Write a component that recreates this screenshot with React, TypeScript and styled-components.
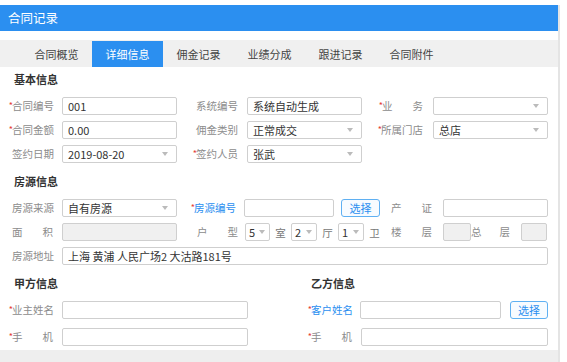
import React from "react"
import styled, { createGlobalStyle } from "styled-components"

const GlobalStyle = createGlobalStyle`
  html, body {
    margin: 0;
    padding: 0;
    background: #fff;
  }
  body {
    font-family: "Noto Sans CJK SC", "Noto Sans", sans-serif;
    color: #333;
  }
  * {
    box-sizing: border-box;
  }
`

const Panel = styled.div`
  width: 560px;
  margin-top: 5px;
  border-right: 2px solid #e4e4e4;
  background: #fff;
`

const Header = styled.div`
  height: 26px;
  line-height: 26px;
  padding-left: 8px;
  background: #2b8ff0;
  color: #fff;
  font-size: 12.5px;
`

const Tabs = styled.div`
  display: flex;
  margin-top: 9px;
  height: 27px;
  padding: 1px 0 0 21px;
  background: #f0f0f0;
`

const Tab = styled.div<{ $active?: boolean }>`
  width: 71px;
  line-height: 26px;
  text-align: center;
  font-size: 11px;
  color: ${p => (p.$active ? "#fff" : "#444")};
  background: ${p => (p.$active ? "#2b8ff0" : "transparent")};
`

const Body = styled.div`
  padding: 2px 10px 0 8px;
`

const SectionTitle = styled.div<{ $top?: number }>`
  height: 20px;
  line-height: 20px;
  margin-top: ${p => p.$top ?? 0}px;
  margin-bottom: 5px;
  padding-left: 6px;
  font-size: 11px;
  font-weight: bold;
  color: #333;
`

const Row = styled.div<{ $gap?: number }>`
  display: flex;
  align-items: center;
  height: 24px;
  margin-top: ${p => p.$gap ?? 0}px;
`

const LabelBox = styled.div<{ $w: number; $pr: number; $blue?: boolean }>`
  flex: none;
  display: flex;
  justify-content: flex-end;
  align-items: center;
  width: ${p => p.$w}px;
  padding-right: ${p => p.$pr}px;
  font-size: 10.5px;
  line-height: 14px;
  color: ${p => (p.$blue ? "#2b8ff0" : "#8c8c8c")};
`

const LabelText = styled.span`
  display: flex;
  justify-content: space-between;
  width: 41px;
`

const Star = styled.span`
  color: #e53935;
  font-size: 9px;
  margin-right: -1px;
`

const TextInput = styled.input<{ $w: number; $disabled?: boolean }>`
  flex: none;
  width: ${p => p.$w}px;
  height: 18px;
  margin: 0;
  padding: 0 5px;
  border: 1px solid #cfcfcf;
  border-radius: 2px;
  outline: none;
  font: inherit;
  font-size: 11px;
  line-height: 16px;
  color: #333;
  background: ${p => (p.$disabled ? "#f0f0f0" : "#fff")};
`

const SelectBox = styled.div<{ $w: number; $small?: boolean }>`
  flex: none;
  display: flex;
  align-items: center;
  justify-content: space-between;
  width: ${p => p.$w}px;
  height: 18px;
  padding: 0 ${p => (p.$small ? 4 : 8)}px 0 ${p => (p.$small ? 3 : 5)}px;
  border: 1px solid #cfcfcf;
  border-radius: 2px;
  font-size: 11px;
  color: #333;
  background: #fff;
`

const Arrow = styled.span`
  width: 0;
  height: 0;
  border-left: 3.5px solid transparent;
  border-right: 3.5px solid transparent;
  border-top: 4px solid #bbb;
`

const Button = styled.div<{ $w: number; $ml: number }>`
  flex: none;
  width: ${p => p.$w}px;
  height: 18px;
  margin-left: ${p => p.$ml}px;
  border: 1px solid #5fb0f2;
  border-radius: 3px;
  line-height: 16px;
  text-align: center;
  font-size: 11px;
  color: #2b8ff0;
  background: #f7fbff;
`

const Unit = styled.span<{ $w: number }>`
  flex: none;
  width: ${p => p.$w}px;
  text-align: center;
  font-size: 10.5px;
  color: #777;
`

const Columns = styled.div`
  display: flex;
`

const Column = styled.div<{ $w?: number }>`
  ${p => (p.$w ? `width: ${p.$w}px; flex: none;` : "flex: 1;")}
`

const Footer = styled.div`
  height: 13px;
  margin-top: 1px;
  background: #eeeeee;
`

type LabelProps = { text: string; w: number; pr?: number; req?: boolean; blue?: boolean }

function Label({ text, w, pr = 9, req, blue }: LabelProps) {
  return (
    <LabelBox $w={w} $pr={pr} $blue={blue}>
      {req && <Star>*</Star>}
      <LabelText>
        {text.split("").map((c, i) => (
          <span key={i}>{c}</span>
        ))}
      </LabelText>
    </LabelBox>
  )
}

function Select({ w, value, small }: { w: number; value?: string; small?: boolean }) {
  return (
    <SelectBox $w={w} $small={small}>
      <span>{value}</span>
      <Arrow />
    </SelectBox>
  )
}

const tabs = ["合同概览", "详细信息", "佣金记录", "业绩分成", "跟进记录", "合同附件"]

export default function App() {
  return (
    <>
      <GlobalStyle />
      <Panel>
        <Header>合同记录</Header>
        <Tabs>
          {tabs.map(t => (
            <Tab key={t} $active={t === "详细信息"}>
              {t}
            </Tab>
          ))}
        </Tabs>
        <Body>
          <SectionTitle>基本信息</SectionTitle>
          <Row>
            <Label text="合同编号" w={54} req />
            <TextInput $w={115} defaultValue="001" readOnly />
            <Label text="系统编号" w={70} pr={10} />
            <TextInput $w={115} defaultValue="系统自动生成" readOnly />
            <Label text="业务" w={71} pr={10} req />
            <Select w={115} />
          </Row>
          <Row>
            <Label text="合同金额" w={54} req />
            <TextInput $w={115} defaultValue="0.00" readOnly />
            <Label text="佣金类别" w={70} pr={10} />
            <Select w={115} value="正常成交" />
            <Label text="所属门店" w={71} pr={11} req />
            <Select w={115} value="总店" />
          </Row>
          <Row>
            <Label text="签约日期" w={54} />
            <Select w={115} value="2019-08-20" />
            <Label text="签约人员" w={70} pr={10} req />
            <Select w={115} value="张武" />
          </Row>

          <SectionTitle $top={5}>房源信息</SectionTitle>
          <Row>
            <Label text="房源来源" w={54} />
            <Select w={115} value="自有房源" />
            <Label text="房源编号" w={67} pr={9} req blue />
            <TextInput $w={90} readOnly />
            <Button $w={39} $ml={7}>选择</Button>
            <Label text="产证" w={63} pr={11} />
            <TextInput $w={105} readOnly />
          </Row>
          <Row>
            <Label text="面积" w={54} />
            <TextInput $w={115} $disabled readOnly />
            <Label text="户型" w={68} pr={7} />
            <Select w={25} value="5" small />
            <Unit $w={21}>室</Unit>
            <Select w={26} value="2" small />
            <Unit $w={21}>厅</Unit>
            <Select w={26} value="1" small />
            <Unit $w={21}>卫</Unit>
            <Label text="楼层" w={58} pr={11} />
            <TextInput $w={28} $disabled readOnly />
            <Label text="总层" w={50} pr={11} />
            <TextInput $w={26} $disabled readOnly />
          </Row>
          <Row>
            <Label text="房源地址" w={54} />
            <TextInput $w={486} defaultValue="上海 黄浦 人民广场2 大沽路181号" readOnly />
          </Row>

          <Columns>
            <Column $w={297}>
              <SectionTitle $top={5}>甲方信息</SectionTitle>
              <Row>
                <Label text="业主姓名" w={54} req />
                <TextInput $w={186} readOnly />
              </Row>
              <Row $gap={3}>
                <Label text="手机" w={54} req />
                <TextInput $w={186} readOnly />
              </Row>
            </Column>
            <Column>
              <SectionTitle $top={5}>乙方信息</SectionTitle>
              <Row>
                <Label text="客户姓名" w={55} pr={8} req blue />
                <TextInput $w={141} readOnly />
                <Button $w={38} $ml={9}>选择</Button>
              </Row>
              <Row $gap={3}>
                <Label text="手机" w={56} pr={9} req />
                <TextInput $w={187} readOnly />
              </Row>
            </Column>
          </Columns>
        </Body>
        <Footer />
      </Panel>
    </>
  )
}
